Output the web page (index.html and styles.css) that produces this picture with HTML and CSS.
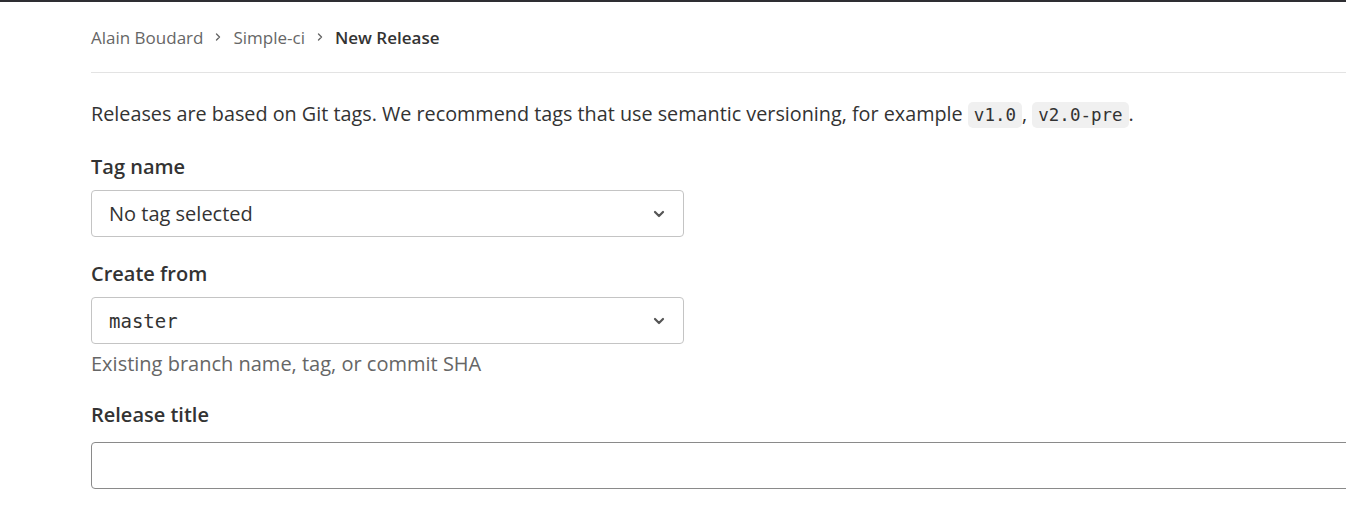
FILE: index.html
```html
<!DOCTYPE html>
<html>
<head>
<meta charset="utf-8">
<link rel="stylesheet" href="styles.css">
</head>
<body>
<div class="topbar"></div>
<div class="page">
  <nav class="breadcrumbs">
    <a class="crumb">Alain Boudard</a>
    <svg class="sep" width="12" height="12" viewBox="0 0 12 12"><path d="M4.5 3l3 3-3 3" fill="none" stroke="#666" stroke-width="1.4" stroke-linecap="round" stroke-linejoin="round"/></svg>
    <a class="crumb">Simple-ci</a>
    <svg class="sep" width="12" height="12" viewBox="0 0 12 12"><path d="M4.5 3l3 3-3 3" fill="none" stroke="#666" stroke-width="1.4" stroke-linecap="round" stroke-linejoin="round"/></svg>
    <span class="crumb current">New Release</span>
  </nav>
  <form class="form">
    <p class="intro">Releases are based on Git tags. We recommend tags that use semantic versioning, for example <code>v1.0</code>, <code>v2.0-pre</code>.</p>
    <div class="group">
      <label class="label">Tag name</label>
      <div class="select">
        <span class="select-text">No tag selected</span>
        <svg class="chev" width="14" height="14" viewBox="0 0 14 14"><path d="M3 5l4 4 4-4" fill="none" stroke="#555" stroke-width="2.2" stroke-linecap="round" stroke-linejoin="round"/></svg>
      </div>
    </div>
    <div class="group">
      <label class="label">Create from</label>
      <div class="select">
        <span class="select-text mono">master</span>
        <svg class="chev" width="14" height="14" viewBox="0 0 14 14"><path d="M3 5l4 4 4-4" fill="none" stroke="#555" stroke-width="2.2" stroke-linecap="round" stroke-linejoin="round"/></svg>
      </div>
      <div class="help">Existing branch name, tag, or commit SHA</div>
    </div>
    <div class="group last">
      <label class="label">Release title</label>
      <div class="input"></div>
    </div>
  </form>
</div>
</body>
</html>
```
FILE: styles.css
```css
html, body {
  margin: 0;
  padding: 0;
  background: #fff;
  overflow: hidden;
}
body {
  font-family: "Open Sans", "Noto Sans", sans-serif;
  color: #303030;
  width: 1346px;
  height: 514px;
}
.topbar {
  height: 2px;
  background: #2e2e32;
}
.page {
  margin-left: 91px;
  width: 1400px;
}
.breadcrumbs {
  display: flex;
  align-items: center;
  height: 70px;
  border-bottom: 1px solid #e3e3e3;
  font-size: 17px;
  gap: 9px;
}
.crumb {
  color: #666;
}
.crumb.current {
  color: #333;
  font-weight: 600;
}
.form {
  padding-top: 26px;
}
.intro {
  margin: 0;
  font-size: 19.8px;
  line-height: 30px;
  color: #333;
}
code {
  font-family: "DejaVu Sans Mono", monospace;
  font-size: 17.5px;
  background: #f0f0f0;
  border-radius: 5px;
  padding: 3px 6px;
  color: #333;
}
.group {
  display: flex;
  flex-direction: column;
  margin-top: 22px;
}
.group.last {
  margin-top: 21px;
}
.label {
  font-size: 20px;
  font-weight: 600;
  line-height: 30px;
  color: #333;
  margin-bottom: 8px;
}
.group.last .label {
  margin-bottom: 12px;
}
.select {
  width: 593px;
  height: 47px;
  box-sizing: border-box;
  border: 1px solid #c4c4c4;
  border-radius: 4px;
  display: flex;
  align-items: center;
  justify-content: space-between;
  padding: 0 17px;
}
.select-text {
  font-size: 20px;
  color: #333;
}
.select-text.mono {
  font-family: "DejaVu Sans Mono", monospace;
  font-size: 19px;
}
.help {
  font-size: 20px;
  color: #666;
  line-height: 30px;
  margin-top: 5px;
}
.input {
  width: 1400px;
  height: 47px;
  box-sizing: border-box;
  border: 1px solid #8a8a8a;
  border-radius: 4px;
}
```
